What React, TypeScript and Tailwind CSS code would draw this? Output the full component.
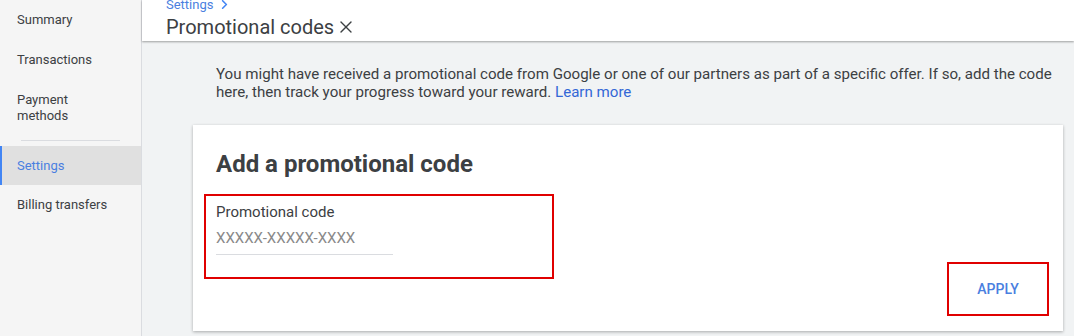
import { ChevronRight, X } from "lucide-react";

export default function App() {
  return (
    <div
      className="flex h-[336px] w-[1074px] overflow-hidden bg-[#f1f3f4] text-[#3c4043]"
      style={{ fontFamily: "Roboto, 'Liberation Sans', sans-serif" }}
    >
      {/* Sidebar */}
      <aside className="flex w-[142px] shrink-0 flex-col border-r border-[#dadce0] bg-[#f5f5f5] text-[13px] leading-[16px] text-[#3c4043]">
        <div className="flex h-[40px] items-center px-[17px]">Summary</div>
        <div className="flex h-[40px] items-center px-[17px]">Transactions</div>
        <div className="flex h-[56px] items-center px-[17px]">
          Payment
          <br />
          methods
        </div>
        <div className="mx-[21px] mt-[4px] h-px bg-[#dadce0]" />
        <div className="mt-[5px] flex h-[39px] items-center border-l-2 border-[#4285f4] bg-[#e0e0e0] pl-[15px] text-[#4a7fe0]">
          Settings
        </div>
        <div className="flex h-[40px] items-center px-[17px]">Billing transfers</div>
      </aside>

      {/* Main */}
      <main className="flex min-w-0 flex-1 flex-col">
        <header className="relative z-10 h-[41px] shrink-0 bg-white px-[24px] shadow-[0_1px_2px_rgba(0,0,0,0.35)]">
          <div className="-mt-[3px] flex items-center gap-[4px] text-[13px] leading-[15px] text-[#4a7fe0]">
            Settings
            <ChevronRight size={15} strokeWidth={2.5} className="text-[#4285f4]" />
          </div>
          <div className="mt-[3px] flex items-center gap-[2px] text-[20px] leading-[24px] text-[#3c4043]">
            Promotional codes
            <X size={20} strokeWidth={1.6} />
          </div>
        </header>

        <div className="flex flex-1 flex-col pl-[51px] pr-[11px]">
          <p className="ml-[23px] mt-[24px] text-[15.1px] leading-[18px] text-[#3c4043]">
            You might have received a promotional code from Google or one of our partners as part of a specific offer. If so, add the code here, then track your progress toward your reward.{" "}
            <span className="text-[#3367d6]">Learn more</span>
          </p>

          <section className="mt-[24px] flex h-[206px] flex-col bg-white px-[23px] shadow-[0_1px_3px_rgba(0,0,0,0.3)]">
            <h2 className="mt-[25px] text-[24px] font-bold leading-[28px] text-[#3c4043]">
              Add a promotional code
            </h2>
            <div className="-ml-[12px] mt-[16px] h-[85px] w-[350px] border-2 border-[#e00000] pl-[10px] pt-[8px]">
              <div className="text-[15px] leading-[17px] text-[#3c4043]">Promotional code</div>
              <div className="mt-[8px] w-[177px] border-b border-[#dadce0] pb-[7px] text-[15px] leading-[18px] text-[#8a8a8a]">
                XXXXX-XXXXX-XXXX
              </div>
            </div>
            <div className="-mt-[17px] mr-[-9px] flex justify-end">
              <button className="flex h-[54px] w-[102px] items-center justify-center border-2 border-[#e00000] text-[14px] font-medium text-[#4a7fe0]">
                APPLY
              </button>
            </div>
          </section>
        </div>
      </main>
    </div>
  );
}
